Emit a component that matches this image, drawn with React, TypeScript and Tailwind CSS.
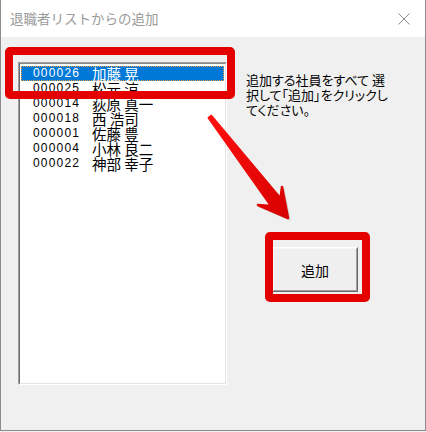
import React from "react";

type Employee = {
  code: string;
  name: string;
};

const employees: Employee[] = [
  { code: "000026", name: "加藤 晃" },
  { code: "000025", name: "松元 涼" },
  { code: "000014", name: "荻原 真一" },
  { code: "000018", name: "西 浩司" },
  { code: "000001", name: "佐藤 豊" },
  { code: "000004", name: "小林 良二" },
  { code: "000022", name: "神部 幸子" },
];

const jp = "font-['Noto_Sans_CJK_JP','Noto_Sans',sans-serif]";

function EmployeeRow({ employee, selected }: { employee: Employee; selected: boolean }) {
  return (
    <div
      className={`flex h-[15px] items-center border ${
        selected
          ? "border-dotted border-[#f39a3c] bg-[#0078d7] text-white"
          : "border-transparent text-black"
      }`}
    >
      <span className="w-[70px] shrink-0 pl-[11px] font-['Liberation_Sans',sans-serif] text-[12px] leading-[15px] tracking-[1.2px]">
        {employee.code}
      </span>
      <span className={`${jp} text-[14.5px] leading-[15px]`}>{employee.name}</span>
    </div>
  );
}

function EmployeeList() {
  return (
    <div className="ml-[17px] h-[323px] w-[209px] border border-t-[#a0a0a0] border-l-[#a0a0a0] border-b-white border-r-white">
      <div className="h-full border border-t-[#8a8a8a] border-l-[#696969] border-b-[#e3e3e3] border-r-[#e3e3e3] bg-white px-px pt-[2px]">
        {employees.map((e, i) => (
          <EmployeeRow key={e.code} employee={e} selected={i === 0} />
        ))}
      </div>
    </div>
  );
}

function Arrow() {
  return (
    <svg className="pointer-events-none absolute left-0 top-0" width="426" height="432">
      <defs>
        <linearGradient id="arrowFill" x1="0" y1="0" x2="1" y2="1">
          <stop offset="0" stopColor="#ff1010" />
          <stop offset="1" stopColor="#d80000" />
        </linearGradient>
      </defs>
      <polygon
        points="208.8,117.9 271.1,205.9 258,205 288,218 282,187 280.5,198.5 211.2,116.1"
        fill="#9a9a9a"
        opacity="0.35"
        transform="translate(1.5,1.5)"
        stroke="#9a9a9a"
        strokeWidth="2"
        strokeLinejoin="round"
      />
      <polygon
        points="208.8,117.9 271.1,205.9 258,205 288,218 282,187 280.5,198.5 211.2,116.1"
        fill="url(#arrowFill)"
        stroke="url(#arrowFill)"
        strokeWidth="2.5"
        strokeLinejoin="round"
      />
    </svg>
  );
}

export default function App() {
  return (
    <div className="relative h-[432px] w-[426px] bg-[#f0f0f0]">
      <div className="relative flex h-[431px] w-[426px] flex-col border-x border-b border-[#8c8c8c] bg-[#f0f0f0]">
        {/* title bar */}
        <div className="flex h-[37px] items-center justify-between bg-white pl-[9px] pr-[15px]">
          <span className={`${jp} text-[13.5px] leading-none text-[#9b9b9b]`}>退職者リストからの追加</span>
          <svg width="12" height="12" viewBox="0 0 12 12">
            <path d="M0.5 0.5 L11.5 11.5 M11.5 0.5 L0.5 11.5" stroke="#8a8a8a" strokeWidth="1" />
          </svg>
        </div>

        <div className="flex pt-[25px]">
          <EmployeeList />

          <div className="ml-[19px] flex flex-col">
            <p className={`${jp} mt-[10px] text-[13px] leading-[15px] text-black [font-feature-settings:'palt']`}>
              <span className="block">追加する社員をすべて 選</span>
              <span className="block">択して「追加」をクリックし</span>
              <span className="block">てください。</span>
            </p>

            <button
              type="button"
              className="ml-[26px] mt-[130px] h-[45px] w-[86px] border border-t-white border-l-white border-b-[#696969] border-r-[#696969] bg-[#efefef]"
            >
              <span className="flex h-full w-full items-center justify-center border border-t-[#f7f7f7] border-l-[#f7f7f7] border-b-[#a0a0a0] border-r-[#a0a0a0]">
                <span className={`${jp} text-[14px] leading-none text-black`}>追加</span>
              </span>
            </button>
          </div>
        </div>

        {/* annotations */}
        <div className="pointer-events-none absolute left-[4px] top-[47px] h-[52px] w-[230px] rounded-[5px] border-[8px] border-[#e50000]" />
        <div className="pointer-events-none absolute left-[264px] top-[232px] h-[70px] w-[105px] rounded-[5px] border-[8px] border-[#e50000]" />
      </div>
      <Arrow />
    </div>
  );
}
